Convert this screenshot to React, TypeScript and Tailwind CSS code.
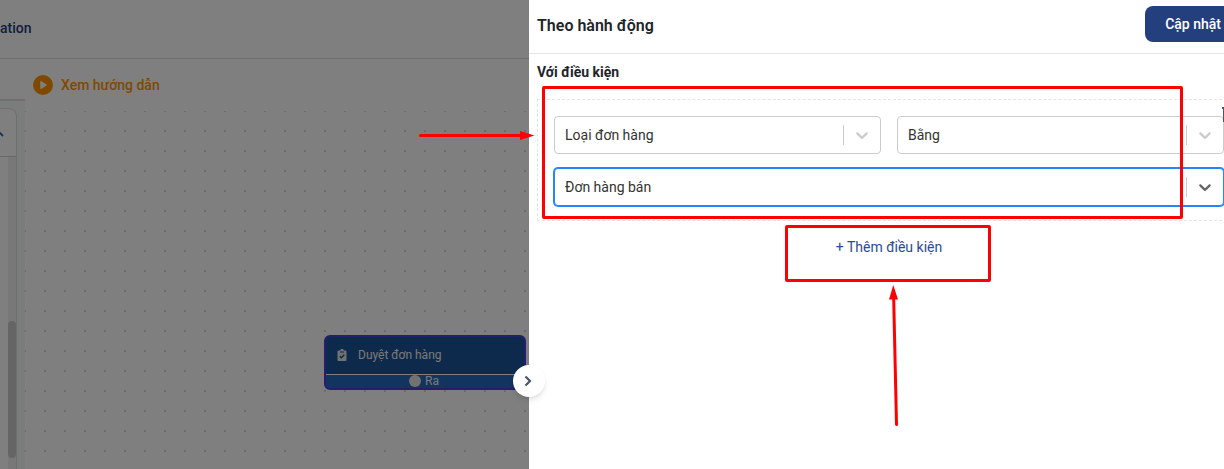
import React from 'react';
import clsx from 'clsx';

interface SelectFieldProps {
  label: string;
  options: string[];
  focused?: boolean;
}

const SelectField: React.FC<SelectFieldProps> = ({ label, options, focused }) => (
  <div
    className={clsx(
      'grid h-[38px] min-w-0 flex-1 grid-cols-1 items-center rounded border bg-white',
      focused ? 'border-[#2684ff] ring-1 ring-[#2684ff]' : 'border-[#cccccc]'
    )}
  >
    <select
      aria-label={label}
      className="col-start-1 row-start-1 h-full w-full appearance-none bg-transparent pl-2.5 pr-10 text-sm text-[#333333] outline-none"
    >
      {options.map(o => (
        <option key={o}>{o}</option>
      ))}
    </select>
    <div
      className={clsx(
        'pointer-events-none col-start-1 row-start-1 flex items-center gap-2 justify-self-end pr-2',
        focused ? 'text-[#666666]' : 'text-[#cccccc]'
      )}
    >
      <span className="h-5 w-px bg-[#cccccc]" />
      <svg viewBox="0 0 20 20" className="h-5 w-5" fill="currentColor" aria-hidden="true">
        <path d="M4.516 7.548c0.436-0.446 1.043-0.481 1.576 0l3.908 3.747 3.908-3.747c0.533-0.481 1.141-0.446 1.574 0 0.436 0.445 0.408 1.197 0 1.615-0.406 0.418-4.695 4.502-4.695 4.502-0.217 0.223-0.502 0.335-0.787 0.335s-0.57-0.112-0.789-0.335c0 0-4.287-4.084-4.695-4.502s-0.436-1.17 0-1.615z" />
      </svg>
    </div>
  </div>
);

const FlowNode: React.FC = () => (
  <div className="absolute left-[299px] top-[224px] w-[202px] overflow-hidden rounded-md border-2 border-[#4b3cdc] bg-[#226bbe] text-xs text-[#f2f2f2]">
    <div className="flex h-[37px] items-center gap-2.5 bg-[#1b5498] px-2.5 pb-0.5">
      <svg viewBox="0 0 12 14" className="h-3.5 w-3 shrink-0" aria-hidden="true">
        <path
          d="M2.500 2.500H4.200C4.200 1.500 4.900 1 6 1S7.800 1.500 7.800 2.500H9.500Q10.500 2.500 10.500 3.500V12Q10.500 13 9.500 13H2.500Q1.500 13 1.500 12V3.500Q1.500 2.500 2.500 2.500Z"
          fill="#e4e4e4"
        />
        <path d="M4 4H8" stroke="#1b5498" strokeWidth="1" />
        <path d="M3.700 8.200L5.300 9.800L8.300 6.800" fill="none" stroke="#1b5498" strokeWidth="1.400" />
      </svg>
      <span>Duyệt đơn hàng</span>
    </div>
    <div className="flex h-[14px] items-center justify-center gap-1 border-t border-white pb-0.5 pr-0.5 leading-none">
      <span className="h-3 w-3 rounded-full bg-[#e4e4e4]" />
      <span>Ra</span>
    </div>
  </div>
);

const Workspace: React.FC = () => (
  <main className="relative flex min-w-0 flex-1 flex-col overflow-hidden bg-white">
    <header className="flex h-[59px] shrink-0 items-center border-b border-[#dddddd] pb-0.5 text-sm font-medium text-[#233f7e]">
      <span>ation</span>
    </header>

    <div className="flex min-h-0 flex-1">
      <aside className="flex w-[25px] shrink-0 flex-col pt-10">
        <div className="flex flex-1 flex-col border-t-2 border-[#e0e0e0] bg-[#f4fbf9] pr-2 pt-[7px]">
          <div className="flex flex-1 flex-col rounded-tr-lg border-r border-t border-[#dddddd] bg-white">
            <button
              aria-label="Thu gọn"
              className="flex h-12 items-center justify-end border-b border-[#d4d4d4] pr-3 text-[#2f5cc0]"
            >
              <svg viewBox="0 0 12 8" className="h-2 w-3 shrink-0" aria-hidden="true">
                <path d="M1 7L6 2L11 7" fill="none" stroke="currentColor" strokeWidth="1.800" />
              </svg>
            </button>
            <div className="flex w-2 flex-1 flex-col self-end bg-[#f0f0f0] pt-[164px]">
              <div className="h-[137px] rounded-full bg-[#cbcbcb]" />
            </div>
          </div>
        </div>
      </aside>

      <section className="flex min-w-0 flex-1 flex-col">
        <a
          href="#guide"
          className="flex h-[52px] shrink-0 items-center gap-2 pl-2 text-sm font-medium text-[#ff9500]"
        >
          <svg viewBox="0 0 20 20" className="h-5 w-5" aria-hidden="true">
            <circle cx="10" cy="10" r="10" fill="currentColor" />
            <path d="M8 6.800V13.200L12.800 10Z" fill="white" stroke="white" strokeWidth="1.600" strokeLinejoin="round" />
          </svg>
          Xem hướng dẫn
        </a>
        <div className="relative flex-1">
          <svg className="absolute inset-0 h-full w-full" aria-hidden="true">
            <defs>
              <pattern id="dots" x="-1" y="-1" width="20" height="20" patternUnits="userSpaceOnUse">
                <rect width="2" height="2" fill="#d8d8d8" />
              </pattern>
            </defs>
            <rect width="100%" height="100%" fill="url(#dots)" />
          </svg>
          <FlowNode />
        </div>
      </section>
    </div>

    {/* Backdrop */}
    <div className="absolute inset-0 bg-black/50" />
  </main>
);

const ActionPanel: React.FC = () => (
  <aside className="relative w-[695px] shrink-0 bg-white">
    <button
      aria-label="Đóng"
      className="absolute -left-4 top-[365px] flex h-8 w-8 items-center justify-center rounded-full bg-white pr-0.5 text-[#4b5563] shadow-md"
    >
      <svg viewBox="0 0 16 16" className="h-4 w-4" aria-hidden="true">
        <path d="M5.500 3.500L10 8L5.500 12.500" fill="none" stroke="currentColor" strokeWidth="2.200" />
      </svg>
    </button>

    <header className="flex h-[54px] items-start justify-between border-b border-[#e5e5e5] pl-2 pt-1.5">
      <h2 className="pt-2 text-base font-semibold text-[#212529]">Theo hành động</h2>
      <button className="-mr-[17px] h-9 rounded-lg bg-[#233f7e] px-5 text-sm font-medium text-white">
        Cập nhật
      </button>
    </header>

    <div className="-mr-[33px] pl-2 pt-2">
      <h3 className="text-sm font-bold text-[#212529]">Với điều kiện</h3>
      <div className="relative mt-[17px] flex flex-col gap-3.5 border border-dashed border-[#e5e5e5] pb-3.5 pl-4 pr-8 pt-4">
        <button aria-label="Xóa" className="absolute right-[20px] top-[6px] text-[#4b5563]">
          <svg viewBox="0 0 14 16" className="h-4 w-3.5" fill="none" stroke="currentColor" strokeWidth="2" aria-hidden="true">
            <path d="M0 2H14M2 2V15H12V2" />
          </svg>
        </button>
        <div className="flex gap-4">
          <SelectField label="Loại" options={['Loại đơn hàng']} />
          <SelectField label="Phép so sánh" options={['Bằng']} />
        </div>
        <div className="flex">
          <SelectField label="Giá trị" options={['Đơn hàng bán']} focused />
        </div>
      </div>
      <div className="flex justify-center pl-4 pr-8 pt-4">
        <button className="text-sm text-[#2a4b94]">+ Thêm điều kiện</button>
      </div>
    </div>
  </aside>
);

/* Red marks on top of the panel */
const Highlights: React.FC = () => (
  <div className="pointer-events-none absolute right-0 top-0 h-full w-[805px]" aria-hidden="true">
    <div className="absolute left-[123px] top-[86px] h-[133px] w-[641px] rounded-xs border-3 border-[#ff0000]" />
    <div className="absolute left-[366px] top-[225px] h-[57px] w-[206px] rounded-xs border-3 border-[#ff0000]" />
    <svg viewBox="0 0 116 10" className="absolute left-0 top-[130px] h-2.5 w-[116px]">
      <path d="M1.500 5.500H102" stroke="#ff0000" strokeWidth="3" strokeLinecap="round" />
      <path d="M101 1L115.500 5.500L101 10Z" fill="#ff0000" />
    </svg>
    <svg viewBox="0 0 12 142" className="absolute left-[469px] top-[285px] h-[142px] w-3">
      <path d="M5.700 14L8.500 139.500" stroke="#ff0000" strokeWidth="3" strokeLinecap="round" />
      <path d="M5.300 0L10 14.500H1Z" fill="#ff0000" />
    </svg>
  </div>
);

export default function App() {
  return (
    <div className="relative flex h-screen overflow-hidden bg-white font-['Roboto',sans-serif]">
      <Workspace />
      <ActionPanel />
      <Highlights />
    </div>
  );
}
